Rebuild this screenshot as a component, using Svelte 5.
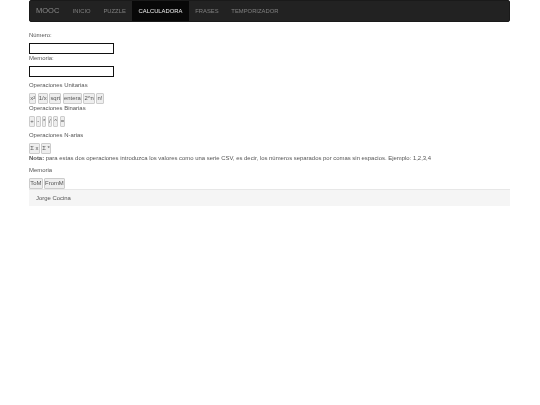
<script>
  const links = ['INICIO', 'PUZZLE', 'CALCULADORA', 'FRASES', 'TEMPORIZADOR'];
  const active = 'CALCULADORA';
  const unarias = ['x²', '1/x', 'sqrt', 'entera', '2^n', 'n!'];
  const binarias = ['+', '-', '*', '/', '^', '='];
  const narias = ['Σ x', 'Σ *'];
  const memoria = ['ToM', 'FromM'];
</script>

<div class="container">
  <nav class="navbar">
    <span class="brand">MOOC</span>
    {#each links as link}
      <a href="#top" class="link" class:active={link === active}>{link}</a>
    {/each}
  </nav>

  <main class="calc">
    <label class="field-label first" for="numero">Número:</label>
    <input id="numero" type="text" />
    <label class="field-label" for="memoria">Memoria:</label>
    <input id="memoria" type="text" />

    <p class="heading spaced">Operaciones Unitarias</p>
    <div class="buttons">
      {#each unarias as b}<button type="button">{b}</button>{/each}
    </div>

    <p class="heading">Operaciones Binarias</p>
    <div class="buttons">
      {#each binarias as b}<button type="button">{b}</button>{/each}
    </div>

    <p class="heading spaced">Operaciones N-arias</p>
    <div class="buttons">
      {#each narias as b}<button type="button">{b}</button>{/each}
    </div>

    <p class="nota"><strong>Nota:</strong> para estas dos operaciones introduzca los valores como una serie CSV, es decir, los números separados por comas sin espacios. Ejemplo: 1,2,3,4</p>

    <p class="heading spaced">Memoria</p>
    <div class="buttons">
      {#each memoria as b}<button type="button">{b}</button>{/each}
    </div>
  </main>

  <footer class="footer">Jorge Cocina</footer>
</div>

<style>
  :global(body) {
    margin: 0;
    background: #fff;
    font-family: "Liberation Sans", Arial, sans-serif;
    font-size: 5.93px;
    line-height: 8px;
    color: #555;
  }
  .container {
    width: 481px;
    margin-left: 29px;
    will-change: transform;
  }
  .navbar {
    display: flex;
    align-items: center;
    height: 22px;
    box-sizing: border-box;
    background: #222;
    border: 1px solid #1a1a1a;
    border-radius: 2px;
    padding-left: 6px;
  }
  .brand {
    font-size: 7.5px;
    color: #8a8a8a;
    margin-right: 7px;
  }
  .link {
    display: flex;
    align-items: center;
    height: 100%;
    padding: 0 6.4px;
    font-size: 5.85px;
    color: #808080;
    text-decoration: none;
  }
  .link.active {
    color: #eee;
    background: #080808;
  }
  .calc {
    display: flex;
    flex-direction: column;
    align-items: flex-start;
  }
  .field-label {
    display: block;
    margin-bottom: 4px;
  }
  .first {
    margin-top: 8.6px;
    margin-bottom: 4.4px;
  }
  input {
    box-sizing: border-box;
    width: 85px;
    height: 11px;
    padding: 0;
    border: 1px solid #111;
    background: #fff;
  }
  .heading {
    margin: 0 0 4px;
  }
  .spaced {
    margin-top: 4px;
  }
  .buttons {
    display: flex;
    gap: 1.3px;
    height: 11px;
  }
  button {
    box-sizing: border-box;
    height: 11px;
    padding: 0 0.2px;
    border: 1px solid #ccc;
    border-radius: 1px;
    background: #eee;
    color: #555;
    font-family: inherit;
    font-size: 5.93px;
    line-height: 8px;
  }
  .nota {
    margin: 0;
  }
  .footer {
    box-sizing: border-box;
    height: 17px;
    padding: 0 7px;
    display: flex;
    align-items: center;
    background: #f5f5f5;
    border-top: 1px solid #e7e7e7;
  }
</style>
